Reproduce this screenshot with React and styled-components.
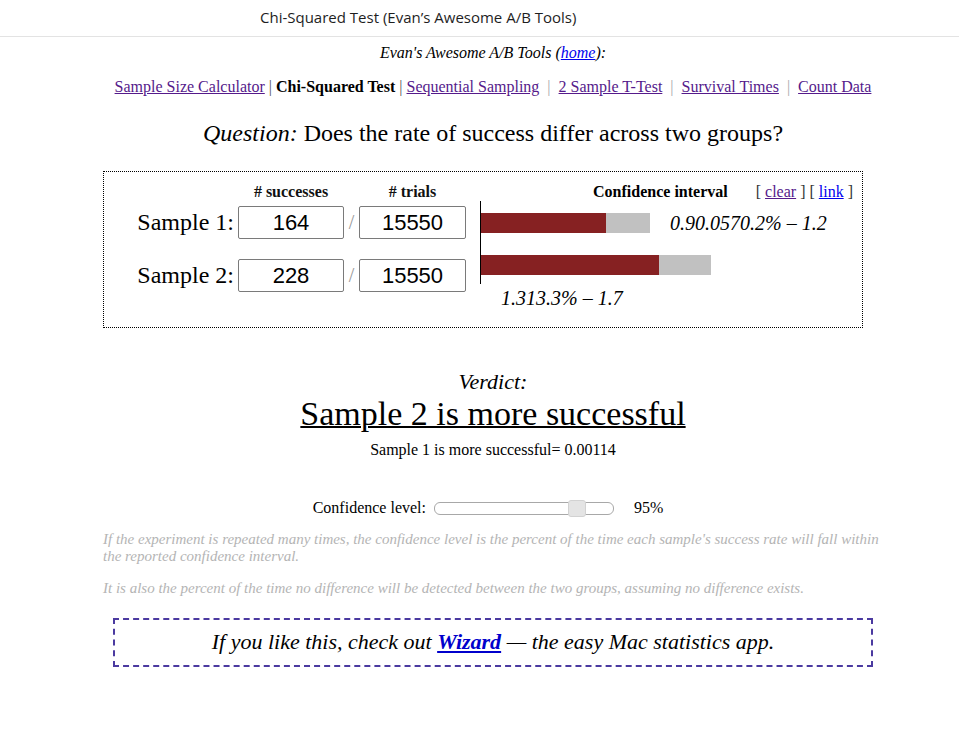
import React from "react";
import styled, { createGlobalStyle } from "styled-components";

const GlobalStyle = createGlobalStyle`
  html, body {
    margin: 0;
    padding: 0;
    background: #fff;
    color: #000;
    font-family: "Liberation Serif", "Times New Roman", serif;
  }
`;

const TitleBar = styled.div`
  height: 36px;
  line-height: 35px;
  padding-left: 260px;
  border-bottom: 1px solid #e3e3e3;
  font-family: "Open Sans", "Noto Sans", sans-serif;
  font-size: 15px;
  color: #1e1e1e;
`;

const Page = styled.div`
  padding-left: 27px;
  text-align: center;
  font-size: 16px;
`;

const Tagline = styled.div`
  margin-top: 7px;
  line-height: 18px;
  font-style: italic;
  font-size: 16px;
`;

const Nav = styled.div`
  margin-top: 16px;
  line-height: 18px;
`;

const NavLink = styled.a`
  color: ${(p) => (p.$visited ? "#551a8b" : "#0000ee")};
  text-decoration: underline;
`;

const Current = styled.b`
  font-weight: bold;
`;

const Sep = styled.span`
  color: ${(p) => (p.$light ? "#aaa" : "#555")};
  margin: 0 ${(p) => (p.$light ? "8px" : "4px")};
`;

const Question = styled.h2`
  margin: 23px 0 0;
  font-weight: normal;
  font-size: 24px;
  line-height: 28px;
  em {
    font-style: italic;
  }
`;

const Content = styled.div`
  width: 780px;
  margin: 0 auto;
  text-align: left;
`;

const Box = styled.div`
  width: 758px;
  margin-top: 24px;
  border: 1px dotted #000;
  padding: 12px 0 20px;
  display: flex;
  align-items: flex-start;
`;

const Inputs = styled.div`
  width: 376px;
  display: grid;
  grid-template-columns: 134px 106px 15px 107px 14px;
  align-items: center;
`;

const ColHead = styled.div`
  font-weight: bold;
  font-size: 16px;
  line-height: 16px;
  text-align: center;
  color: #111;
`;

const RowLabel = styled.div`
  font-size: 24px;
  text-align: right;
  padding-right: 4px;
  margin-top: ${(p) => p.$top}px;
`;

const NumInput = styled.input`
  box-sizing: border-box;
  width: 100%;
  height: 33px;
  margin-top: ${(p) => p.$top}px;
  border: 1px solid #7a7a7a;
  border-radius: 2px;
  font-family: "Liberation Sans", Arial, sans-serif;
  font-size: 22px;
  text-align: center;
  color: #000;
  padding: 0;
  outline: none;
`;

const Slash = styled.div`
  font-size: 20px;
  color: #999;
  text-align: center;
  margin-top: ${(p) => p.$top}px;
`;

const Chart = styled.div`
  flex: 1;
`;

const ChartHead = styled.div`
  display: flex;
  justify-content: flex-end;
  align-items: center;
  gap: 28px;
  padding-right: 9px;
  height: 16px;
  font-size: 16px;
`;

const Brackets = styled.span`
  font-size: 16px;
  color: #333;
`;

const Axis = styled.div`
  margin-top: 1px;
  height: 71px;
  padding-top: 12px;
  border-left: 1px solid #000;
  display: flex;
  flex-direction: column;
  gap: 22px;
`;

const BarRow = styled.div`
  display: flex;
  align-items: center;
  height: 20px;
`;

const Bar = styled.div`
  height: 20px;
  width: ${(p) => p.$w}px;
  background: ${(p) => (p.$ci ? "#c1c1c1" : "#862122")};
`;

const Interval = styled.span`
  font-style: italic;
  font-size: 20px;
  margin-left: 20px;
  white-space: nowrap;
`;

const BelowInterval = styled.div`
  font-style: italic;
  font-size: 20px;
  padding-left: 21px;
  margin-top: 5px;
  line-height: 18px;
`;

const VerdictLabel = styled.div`
  margin-top: 41px;
  font-style: italic;
  font-size: 22px;
  line-height: 26px;
`;

const Verdict = styled.div`
  font-size: 34px;
  line-height: 38px;
  text-decoration: underline;
  text-decoration-thickness: 2px;
`;

const PValue = styled.div`
  margin-top: 8px;
  font-size: 16px;
  line-height: 18px;
`;

const LevelRow = styled.div`
  margin-top: 39px;
  display: flex;
  justify-content: center;
  align-items: center;
  gap: 8px;
  font-size: 16px;
  line-height: 20px;
  padding-right: 10px;
`;

const Range = styled.input`
  -webkit-appearance: none;
  appearance: none;
  width: 180px;
  height: 13px;
  margin: 0;
  background: #fff;
  border: 1px solid #a8a8a8;
  border-radius: 6px;
  box-sizing: border-box;
  outline: none;
  &::-webkit-slider-thumb {
    -webkit-appearance: none;
    width: 18px;
    height: 17px;
    border-radius: 3px;
    background: #e4e4e4;
    border: 1px solid #d2d2d2;
  }
`;

const Pct = styled.span`
  margin-left: 12px;
`;

const Note = styled.p`
  margin: ${(p) => p.$top}px 0 0;
  font-style: italic;
  font-size: 15px;
  line-height: 17px;
  color: #b4b4b4;
  text-align: left;
`;

const Promo = styled.div`
  width: 756px;
  margin: 21px auto 0;
  border: 2px dashed #4b3aa0;
  padding: 9px 0 10px;
  text-align: center;
  font-style: italic;
  font-size: 22px;
  line-height: 26px;
`;

const Wizard = styled.a`
  color: #0000cc;
  font-weight: bold;
  text-decoration: underline;
`;

const samples = [
  { name: "Sample 1", succ: 164, trials: 15550, bar: 125, ci: 44, text: "0.90.0570.2% – 1.2" },
  { name: "Sample 2", succ: 228, trials: 15550, bar: 178, ci: 52, text: "1.313.3% – 1.7" },
];

export default function App() {
  return (
    <>
      <GlobalStyle />
      <TitleBar>Chi-Squared Test (Evan’s Awesome A/B Tools)</TitleBar>
      <Page>
        <Tagline>
          Evan's Awesome A/B Tools (<NavLink href="#">home</NavLink>):
        </Tagline>
        <Nav>
          <NavLink $visited href="#">Sample Size Calculator</NavLink>
          <Sep>|</Sep>
          <Current>Chi-Squared Test</Current>
          <Sep>|</Sep>
          <NavLink $visited href="#">Sequential Sampling</NavLink>
          <Sep $light>|</Sep>
          <NavLink $visited href="#">2 Sample T-Test</NavLink>
          <Sep $light>|</Sep>
          <NavLink $visited href="#">Survival Times</NavLink>
          <Sep $light>|</Sep>
          <NavLink $visited href="#">Count Data</NavLink>
        </Nav>
        <Question>
          <em>Question:</em> Does the rate of success differ across two groups?
        </Question>
        <Content>
          <Box>
            <Inputs>
              <div />
              <ColHead># successes</ColHead>
              <div />
              <ColHead># trials</ColHead>
              <div />
              {samples.map((s, i) => (
                <React.Fragment key={s.name}>
                  <RowLabel $top={i ? 20 : 6}>{s.name}:</RowLabel>
                  <NumInput $top={i ? 20 : 6} defaultValue={s.succ} />
                  <Slash $top={i ? 20 : 6}>/</Slash>
                  <NumInput $top={i ? 20 : 6} defaultValue={s.trials} />
                  <div />
                </React.Fragment>
              ))}
            </Inputs>
            <Chart>
              <ChartHead>
                <b>Confidence interval</b>
                <Brackets>
                  [ <NavLink $visited href="#">clear</NavLink> ] [ <NavLink href="#">link</NavLink> ]
                </Brackets>
              </ChartHead>
              <Axis>
                {samples.map((s, i) => (
                  <BarRow key={s.name}>
                    <Bar $w={s.bar} />
                    <Bar $ci $w={s.ci} />
                    {i === 0 && <Interval>{s.text}</Interval>}
                  </BarRow>
                ))}
              </Axis>
              <BelowInterval>{samples[1].text}</BelowInterval>
            </Chart>
          </Box>
        </Content>
        <VerdictLabel>Verdict:</VerdictLabel>
        <Verdict>Sample 2 is more successful</Verdict>
        <PValue>Sample 1 is more successful= 0.00114</PValue>
        <LevelRow>
          Confidence level:
          <Range type="range" min={80} max={98} step={1} defaultValue={95} />
          <Pct>95%</Pct>
        </LevelRow>
        <Content>
          <Note $top={13}>
            If the experiment is repeated many times, the confidence level is the percent of the time each sample's success rate will fall within the reported confidence interval.
          </Note>
          <Note $top={15}>
            It is also the percent of the time no difference will be detected between the two groups, assuming no difference exists.
          </Note>
          <Promo>
            If you like this, check out <Wizard href="#">Wizard</Wizard> — the easy Mac statistics app.
          </Promo>
        </Content>
      </Page>
    </>
  );
}
